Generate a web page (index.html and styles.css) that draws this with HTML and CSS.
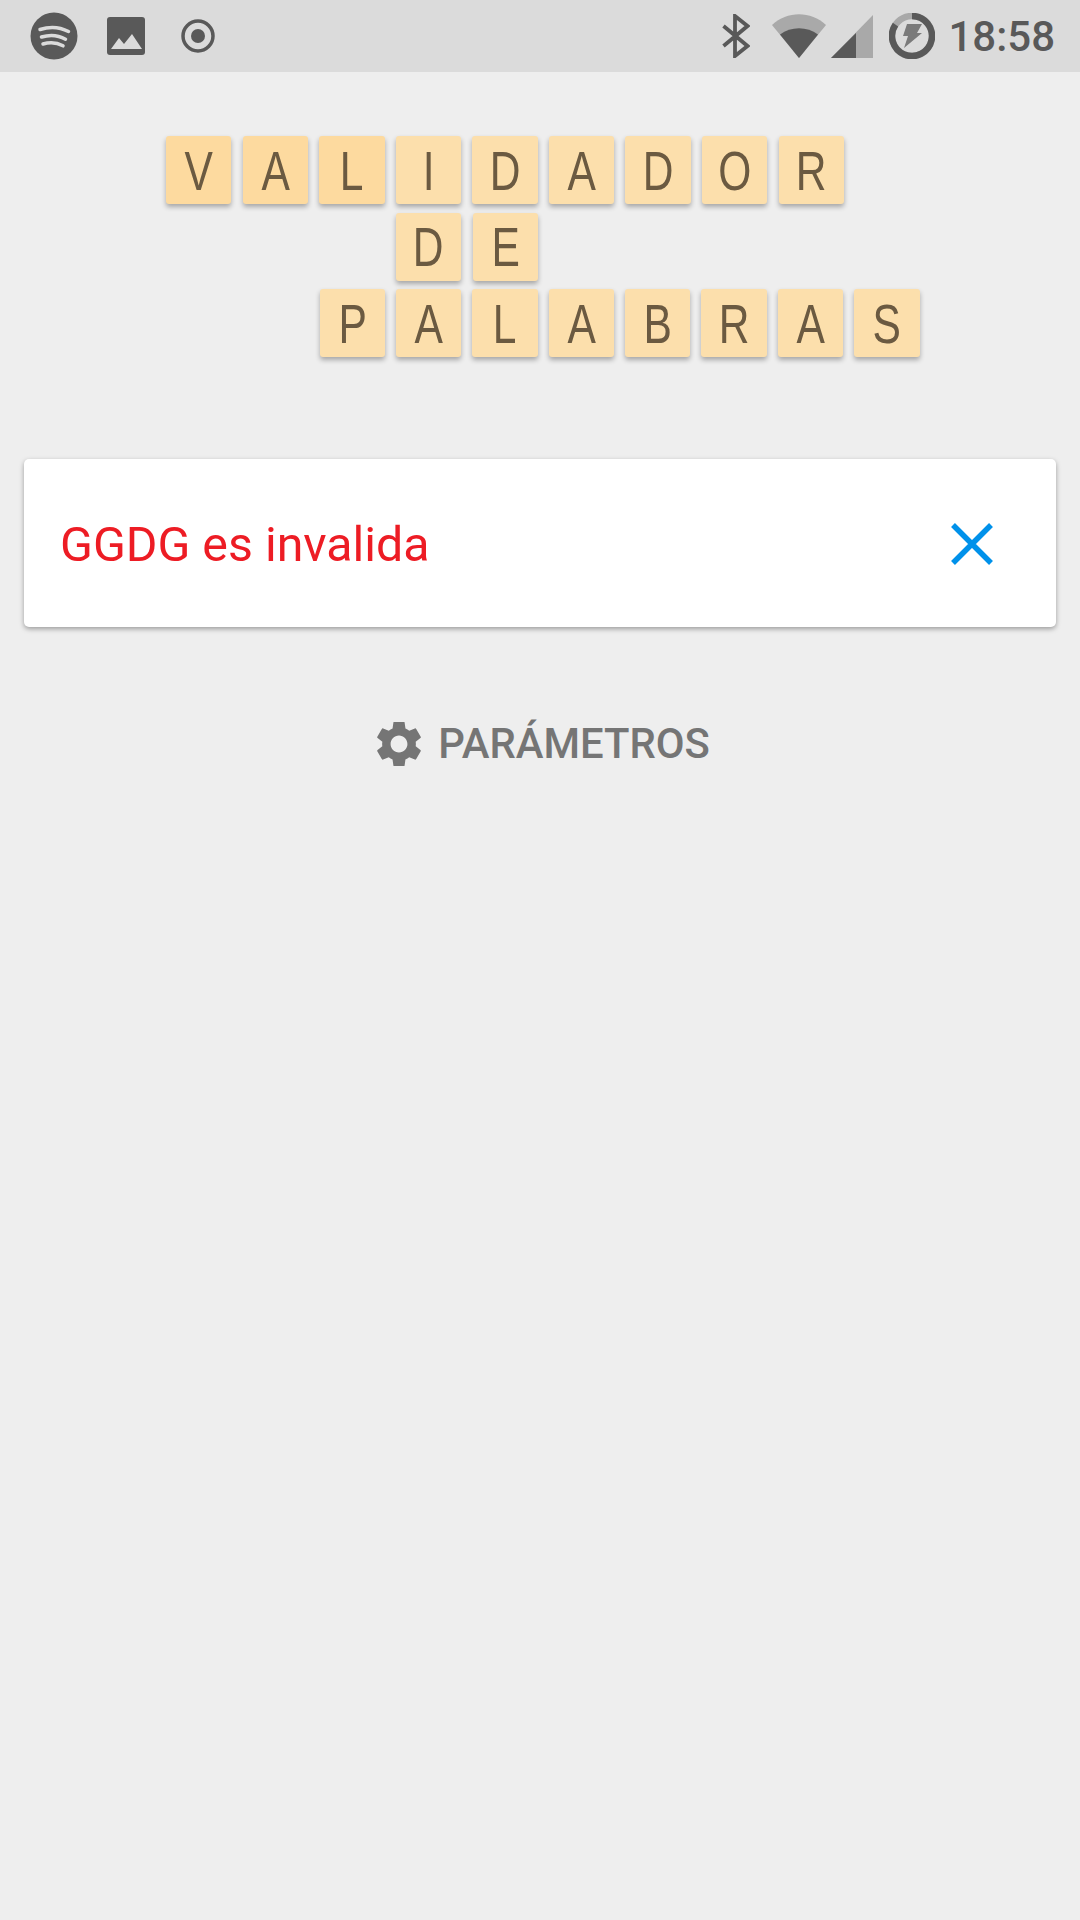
FILE: index.html
```html
<!DOCTYPE html>
<html lang="es">
<head>
    <meta charset="UTF-8">
    <title>Validador de palabras</title>
    <link rel="stylesheet" href="styles.css">
</head>
<body>
    <div class="statusBar">
        <div class="statusLeft">
            <svg class="spotifyIcon" viewBox="0 0 48 48">
                <circle cx="24" cy="24" r="23.5" fill="#595959"/>
                <path d="M10 17.5c9-3 20-2.500 28.500 2M11.500 25c8-2.500 17-1.800 24 2.200M13 32c6.500-2 14-1.500 20 1.800" fill="none" stroke="#dbdbdb" stroke-width="3.500" stroke-linecap="round"/>
            </svg>
            <svg class="pictureIcon" viewBox="0 0 38 38">
                <rect width="38" height="38" rx="3" fill="#595959"/>
                <path d="M4 32l8-11 5 6 8-10 10 15z" fill="#dbdbdb"/>
            </svg>
            <svg class="targetIcon" viewBox="0 0 34 34">
                <circle cx="17" cy="17" r="15" fill="none" stroke="#595959" stroke-width="3.500"/>
                <circle cx="17" cy="17" r="7" fill="#595959"/>
            </svg>
        </div>
        <div class="statusRight">
            <svg class="bluetoothIcon" viewBox="0 0 28 44">
                <path d="M1.500 12l24 20L13 42V2L25.500 12l-24 20" fill="none" stroke="#595959" stroke-width="3.800"/>
            </svg>
            <svg class="wifiIcon" viewBox="0 0 54 44">
                <path d="M0 11C15-3.500 39-3.500 54 11L27 44z" fill="#a9a9a9"/>
                <path d="M8 20.500c11-8.500 27-8.500 38 0L27 44z" fill="#595959"/>
            </svg>
            <svg class="signalIcon" viewBox="0 0 42 43">
                <path d="M42 0v43H0z" fill="#a9a9a9"/>
                <path d="M25 18v25H0z" fill="#595959"/>
            </svg>
            <svg class="batteryIcon" viewBox="0 0 46 46">
                <circle cx="23" cy="23" r="20" fill="none" stroke="#a9a9a9" stroke-width="6.500"/>
                <path d="M23 3A20 20 0 1 1 6.500 11.700" fill="none" stroke="#595959" stroke-width="6.500"/>
                <path d="M18 11h15l-5 9h5L15 35l4-12h-5z" fill="#7a7a7a"/>
            </svg>
            <span class="clock">18:58</span>
        </div>
    </div>

    <div class="title">
        <div class="tileRow">
            <span class="tile warm"><span class="letter">V</span></span>
            <span class="tile warm"><span class="letter">A</span></span>
            <span class="tile warm"><span class="letter">L</span></span>
            <span class="tile"><span class="letter">I</span></span>
            <span class="tile"><span class="letter">D</span></span>
            <span class="tile"><span class="letter">A</span></span>
            <span class="tile"><span class="letter">D</span></span>
            <span class="tile"><span class="letter">O</span></span>
            <span class="tile"><span class="letter">R</span></span>
        </div>
        <div class="tileRow rowDe">
            <span class="tile"><span class="letter">D</span></span>
            <span class="tile"><span class="letter">E</span></span>
        </div>
        <div class="tileRow rowPalabras">
            <span class="tile"><span class="letter">P</span></span>
            <span class="tile"><span class="letter">A</span></span>
            <span class="tile"><span class="letter">L</span></span>
            <span class="tile"><span class="letter">A</span></span>
            <span class="tile"><span class="letter">B</span></span>
            <span class="tile"><span class="letter">R</span></span>
            <span class="tile"><span class="letter">A</span></span>
            <span class="tile"><span class="letter">S</span></span>
        </div>
    </div>

    <div class="card">
        <span class="cardText">GGDG es invalida</span>
        <svg class="closeIcon" viewBox="0 0 42 42">
            <path d="M2 2l38 38M40 2L2 40" fill="none" stroke="#0091ea" stroke-width="5.500"/>
        </svg>
    </div>

    <div class="params">
        <svg class="gearIcon" viewBox="2.600 2.600 18.800 18.800">
            <path d="M19.140 12.940c.04-.3.06-.61.06-.94 0-.32-.02-.64-.07-.94l2.030-1.580c.18-.14.23-.41.12-.61l-1.920-3.320c-.12-.22-.37-.29-.59-.22l-2.390.96c-.5-.38-1.030-.7-1.620-.94l-.36-2.540c-.04-.24-.24-.41-.48-.41h-3.840c-.24 0-.43.17-.47.41l-.36 2.540c-.59.24-1.130.57-1.620.94l-2.390-.96c-.22-.08-.47 0-.59.22L2.740 8.870c-.12.21-.08.47.12.61l2.030 1.580c-.05.3-.09.63-.09.94s.02.64.07.94l-2.030 1.580c-.18.14-.23.41-.12.61l1.920 3.320c.12.22.37.29.59.22l2.390-.96c.5.38 1.030.7 1.620.94l.36 2.540c.05.24.24.41.48.41h3.840c.24 0 .44-.17.47-.41l.36-2.540c.59-.24 1.130-.56 1.620-.94l2.390.96c.22.08.47 0 .59-.22l1.920-3.320c.12-.22.07-.47-.12-.61l-2.010-1.580zM12 15.600c-1.980 0-3.600-1.620-3.600-3.600s1.620-3.600 3.600-3.600 3.600 1.620 3.600 3.600-1.620 3.600-3.600 3.600z" fill="#757575"/>
        </svg>
        <span class="paramsText">PARÁMETROS</span>
    </div>
</body>
</html>
```

FILE: styles.css
```css
body {
    background-color: #eeeeee;
    margin: 0;
    height: 1920px;
    font-family: Roboto, sans-serif;
    overflow: hidden;
}
.statusBar {
    background-color: #dbdbdb;
    height: 72px;
    display: flex;
    justify-content: space-between;
    align-items: center;
    padding: 0 25px 0 30px;
}
.statusLeft {
    display: flex;
    align-items: center;
}
.statusRight {
    display: flex;
    align-items: center;
}
.spotifyIcon {
    width: 48px;
    height: 48px;
    margin-right: 29px;
}
.pictureIcon {
    width: 38px;
    height: 38px;
    margin-right: 36px;
}
.targetIcon {
    width: 34px;
    height: 34px;
}
.bluetoothIcon {
    width: 28px;
    height: 44px;
    margin-right: 22px;
}
.wifiIcon {
    width: 54px;
    height: 44px;
    margin-right: 5px;
}
.signalIcon {
    width: 42px;
    height: 43px;
    margin-right: 16px;
}
.batteryIcon {
    width: 46px;
    height: 46px;
    margin-right: 13px;
}
.clock {
    color: #595959;
    font-size: 42px;
    font-weight: 500;
}
.title {
    padding: 64px 0 0 166px;
}
.tileRow {
    display: flex;
    gap: 11.200px;
    margin-bottom: 8.500px;
}
.rowDe {
    padding-left: 230px;
}
.rowPalabras {
    gap: 11px;
    padding-left: 153.500px;
}
.tile {
    width: 65.400px;
    height: 68px;
    display: flex;
    justify-content: center;
    align-items: center;
    background-color: #fcdfac;
    border-radius: 3px;
    box-shadow: 0 3px 5px rgba(0, 0, 0, 0.3);
    color: #6b5a41;
    font-family: "Liberation Sans", sans-serif;
    font-size: 56px;
}
/* no narrow font installed, so squeeze the letters */
.letter {
    display: inline-block;
    transform: scaleX(0.76);
}
.warm {
    background-color: #fdda9f;
}
.card {
    box-sizing: border-box;
    background-color: #ffffff;
    height: 168px;
    margin: 102px 24px 0;
    padding: 2px 63px 0 36px;
    display: flex;
    justify-content: space-between;
    align-items: center;
    border-radius: 5px;
    box-shadow: 0 2px 5px rgba(0, 0, 0, 0.35);
}
.cardText {
    color: #ed1c24;
    font-size: 48.300px;
}
.closeIcon {
    width: 42px;
    height: 42px;
}
.params {
    display: flex;
    justify-content: center;
    align-items: center;
    gap: 17px;
    margin-top: 92px;
    padding-left: 7px;
}
.gearIcon {
    width: 44px;
    height: 44px;
}
.paramsText {
    color: #757575;
    font-size: 41.800px;
    font-weight: 500;
}
```
